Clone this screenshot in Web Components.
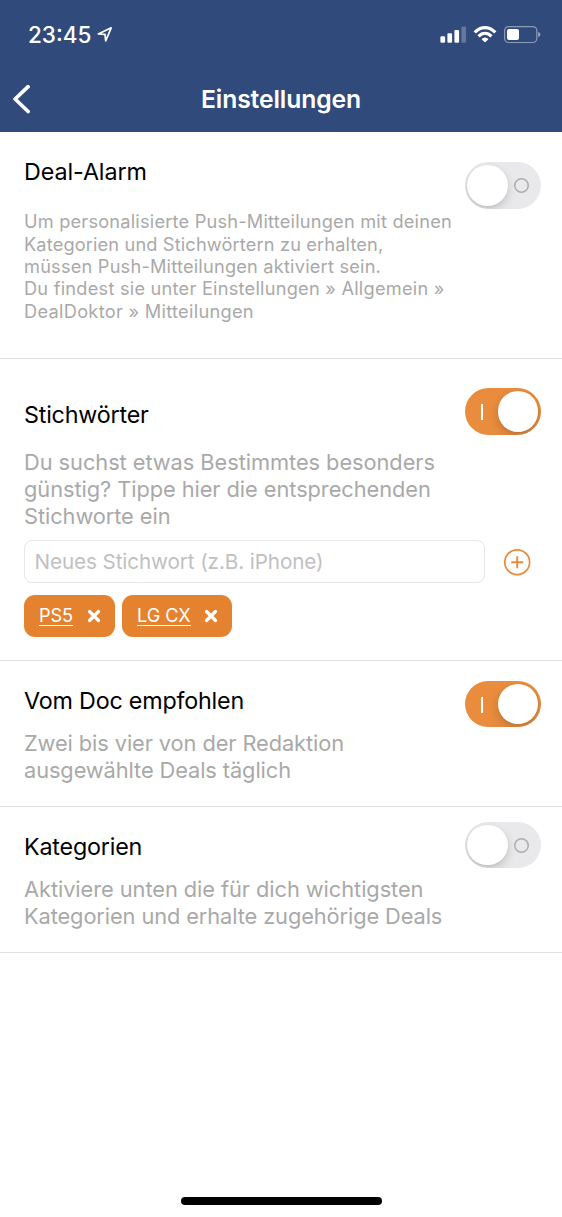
<!DOCTYPE html>
<html lang="de">
<head>
<meta charset="utf-8">
<title>Einstellungen</title>
<style>
  html, body { margin: 0; background: #fff; }
  body { font-family: Inter, "Liberation Sans", sans-serif; color: #000; }
</style>
</head>
<body>
<settings-app></settings-app>

<script>
const define = (name, html, setup) => {
  const template = document.createElement('template');
  template.innerHTML = html;
  customElements.define(name, class extends HTMLElement {
    constructor() {
      super();
      this.attachShadow({ mode: 'open' }).append(template.content.cloneNode(true));
    }
    connectedCallback() { if (setup) setup(this); }
  });
};

// One line of text with its own tracking.
define('text-line', `
  <style>:host { display: block; white-space: nowrap; }</style><slot></slot>`,
  el => { el.style.letterSpacing = (el.getAttribute('track') || 0) + 'px'; });

define('status-bar', `
  <style>
    :host { display: flex; justify-content: space-between; align-items: flex-start; height: 66px; box-sizing: border-box; padding: 20px 20px 0 28px; color: #fff; }
    .time { display: flex; font-size: 22.5px; font-weight: 500; line-height: 30px; letter-spacing: 0; }
    svg { display: block; }
    .time svg { margin: 5px 0 0 4px; }
    .icons { margin-top: 4px; }
  </style>
  <div class="time"><span>23:45</span>
    <svg width="18" height="20" viewBox="95 25 18 20"><path d="M98.3 33.9 111.2 27.8 105.7 40.8 105 34.3Z" fill="none" stroke="#fff" stroke-width="1.7" stroke-linejoin="round"/></svg>
  </div>
  <svg class="icons" width="102" height="22" viewBox="440 24 102 22">
    <g fill="#fff">
      <rect x="440.4" y="36.3" width="4.7" height="6.5" rx="1.2"/>
      <rect x="447.4" y="33.2" width="4.7" height="9.6" rx="1.2"/>
      <rect x="454.4" y="29.9" width="4.7" height="12.9" rx="1.2"/>
      <rect x="461.4" y="26.5" width="4.7" height="16.3" rx="1.2" opacity=".25"/>
      <path d="M485 42 481.9 39.2Q485 36.5 488.1 39.2Z" stroke="#fff" stroke-width=".8" stroke-linejoin="round"/>
      <rect x="507" y="29.1" width="12" height="11" rx="2"/>
    </g>
    <g fill="none" stroke="#fff" stroke-width="3.1">
      <path d="M474.7 32.3Q479.5 27.6 485 27.6T495.3 32.3"/>
      <path d="M478.5 36.3Q481.5 33.3 485 33.3T491.5 36.3"/>
    </g>
    <rect x="504.6" y="26.6" width="32.2" height="15.9" rx="4" fill="none" stroke="#fff" stroke-opacity=".45" stroke-width="1.2"/>
    <path d="M538.2 31.8Q540.4 32.8 540.4 34.5T538.2 37.3Z" fill="#fff" opacity=".5"/>
  </svg>`);

define('nav-bar', `
  <style>
    :host { display: grid; grid-template-columns: 48px 1fr 48px; align-items: center; height: 66px; color: #fff; }
    svg { display: block; margin-left: 12px; }
    h1 { margin: 0; text-align: center; font-size: 24.7px; font-weight: 600; line-height: 32px; letter-spacing: -0.1px; }
  </style>
  <svg width="20" height="30" viewBox="12 84 20 30"><path d="M28.1 86.7 15.1 99 28.1 111.5" fill="none" stroke="#fff" stroke-width="3.7" stroke-linecap="round" stroke-linejoin="round"/></svg>
  <h1><slot></slot></h1>`);

define('toggle-switch', `
  <style>
    :host { display: flex; align-items: center; box-sizing: border-box; width: 76.5px; height: 46.5px; margin-left: -0.5px; padding: 0 2.7px; border-radius: 24px; background: #e9e9eb; overflow: hidden; }
    :host([on]) { flex-direction: row-reverse; background: #e98c3d; }
    .knob { width: 40.5px; height: 40.5px; flex: none; border-radius: 50%; background: #fff; box-shadow: 0 4px 10px rgba(0,0,0,.16), 0 1px 2px rgba(0,0,0,.06); }
    .mark { width: 15px; height: 15px; margin-left: 6.8px; margin-top: 1px; box-shadow: inset 0 0 0 1.5px #acacae; border-radius: 50%; }
    :host([on]) .mark { width: 2px; height: 16px; margin: 1px 15px 0 0; box-shadow: none; border-radius: 0; background: #fff; }
  </style>
  <div class="knob"></div><div class="mark"></div>`);

define('settings-section', `
  <style>
    :host { display: grid; grid-template-columns: 1fr 76px; grid-template-rows: auto 1fr; box-sizing: border-box; height: var(--h); padding: 0 21px 0 24px; border-bottom: 1.5px solid #e1e1e2; }
    .text { padding-top: var(--top); min-width: 0; }
    h2 { margin: 0; font-size: 23.3px; font-weight: 400; line-height: 28px; }
    .desc { margin-top: var(--gap, 15px); font-size: 21.8px; line-height: 26.7px; color: #a9a9a9; }
    :host([small]) .desc { font-size: 18.2px; line-height: 22.33px; }
    .switch { margin-top: var(--switch); }
    .more { grid-column: 1 / -1; }
  </style>
  <div class="text"><h2><slot name="title"></slot></h2><div class="desc"><slot></slot></div></div>
  <toggle-switch class="switch"></toggle-switch>
  <div class="more"><slot name="more"></slot></div>`,
  el => el.shadowRoot.querySelector('toggle-switch').toggleAttribute('on', el.hasAttribute('on')));

define('keyword-field', `
  <style>
    :host { display: flex; align-items: center; margin-top: 11px; }
    .box { box-sizing: border-box; width: 460.5px; height: 43px; padding-left: 9.5px; border: 1.5px solid #e6e6e7; border-radius: 8px; font-size: 20.7px; line-height: 42px; color: #c0c0c2; }
    svg { display: block; margin-left: 18px; }
  </style>
  <div class="box"><slot></slot></div>
  <svg width="28" height="28" viewBox="0 0 28 28" fill="none" stroke="#e9893a"><circle cx="14.2" cy="14.2" r="12.4" stroke-width="1.7"/><path d="M14.2 8.2v12M8.2 14.2h12" stroke-width="1.9"/></svg>`);

define('keyword-chip', `
  <style>
    :host { display: flex; align-items: center; justify-content: space-between; box-sizing: border-box; width: var(--w); height: 42px; padding: 0 14px 0 15px; border-radius: 11px; background: #e5822f; color: #fff; font-size: 18.2px; line-height: 26px; }
    .label { border-bottom: 1.5px solid #fff; line-height: 21px; height: 20px; margin-top: -1px; }
    svg { display: block; }
  </style>
  <span class="label"><slot></slot></span>
  <svg width="14" height="14" viewBox="0 0 14 14"><path d="M2.5 2.5 11.5 11.5M11.5 2.5 2.5 11.5" stroke="#fff" stroke-width="3.2" stroke-linecap="round"/></svg>`);

define('chip-row', `
  <style>:host { display: flex; gap: 7px; margin-top: 11.7px; }</style><slot></slot>`);

define('settings-app', `
  <style>
    :host { display: flex; flex-direction: column; width: 562px; height: 1217px; box-sizing: border-box; overflow: hidden; background: #fff; }
    header { height: 132.4px; background: #304b7b; }
    .home { width: 201px; height: 8px; margin: auto auto 12px 181px; border-radius: 4px; background: #000; }
  </style>
  <header><status-bar></status-bar><nav-bar>Einstellungen</nav-bar></header>
  <main>
    <settings-section small style="--h:226.6px;--top:25.3px;--gap:24.8px;--switch:29.8px">
      <text-line slot="title" track="-0.08">Deal-Alarm</text-line>
      <text-line track="0.21">Um personalisierte Push-Mitteilungen mit deinen</text-line>
      <text-line track="0.15">Kategorien und Stichwörtern zu erhalten,</text-line>
      <text-line track="0.21">müssen Push-Mitteilungen aktiviert sein.</text-line>
      <text-line track="0.24">Du findest sie unter Einstellungen » Allgemein »</text-line>
      <text-line track="0.3">DealDoktor » Mitteilungen</text-line>
    </settings-section>
    <settings-section on style="--h:302px;--top:42.3px;--gap:19.9px;--switch:29.3px">
      <text-line slot="title" track="-0.2">Stichwörter</text-line>
      <text-line track="-0.05">Du suchst etwas Bestimmtes besonders</text-line>
      <text-line track="-0.06">günstig? Tippe hier die entsprechenden</text-line>
      <text-line track="-0.07">Stichworte ein</text-line>
      <keyword-field slot="more"><text-line track="-0.11">Neues Stichwort (z.B. iPhone)</text-line></keyword-field>
      <chip-row slot="more">
        <keyword-chip style="--w:91px"><text-line track="-0.1">PS5</text-line></keyword-chip>
        <keyword-chip style="--w:110px"><text-line track="-0.1">LG CX</text-line></keyword-chip>
      </chip-row>
    </settings-section>
    <settings-section on style="--h:146px;--top:26.3px;--gap:14.8px;--switch:19.8px">
      <text-line slot="title" track="-0.2">Vom Doc empfohlen</text-line>
      <text-line track="-0.09">Zwei bis vier von der Redaktion</text-line>
      <text-line track="-0.09">ausgewählte Deals täglich</text-line>
    </settings-section>
    <settings-section style="--h:146px;--top:26.3px;--gap:14.8px;--switch:14.8px">
      <text-line slot="title" track="-0.2">Kategorien</text-line>
      <text-line track="-0.06">Aktiviere unten die für dich wichtigsten</text-line>
      <text-line track="-0.1">Kategorien und erhalte zugehörige Deals</text-line>
    </settings-section>
  </main>
  <div class="home"></div>`);
</script>
</body>
</html>
